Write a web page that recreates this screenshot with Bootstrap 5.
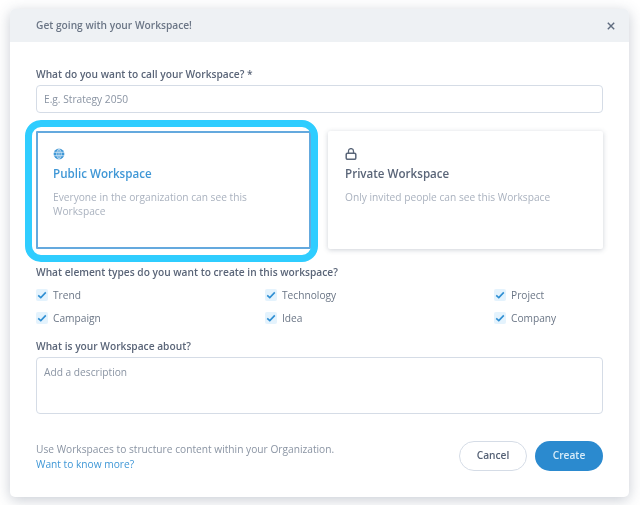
<!DOCTYPE html>
<html lang="en">
<head>
  <meta charset="UTF-8">
  <title>Get going with your Workspace</title>
  <meta name="viewport" content="width=device-width, initial-scale=1">
  <link href="https://cdn.jsdelivr.net/npm/bootstrap@5.3.0/dist/css/bootstrap.min.css" rel="stylesheet">
  <script src="https://cdn.jsdelivr.net/npm/bootstrap@5.3.0/dist/js/bootstrap.bundle.min.js"></script>
  <style>
    html, body {
      height: 100%;
      background: #fff;
      font-family: "Open Sans", sans-serif;
      overflow: hidden;
    }

    .ws-modal {
      width: 619px;
      height: 488px;
      margin: 9px 0 0 10px;
      background: #fff;
      border-radius: 5px;
      box-shadow: 0 3px 14px rgba(60, 75, 100, 0.28);
      overflow: hidden;
      filter: blur(.4px);
    }

    .ws-head {
      height: 33px;
      padding: 1px 13px 0 26px;
      background: #eef1f4;
      color: #6b7686;
      font-size: 10.2px;
      font-weight: 600;
    }

    .ws-close {
      width: 8px;
      height: 8px;
      color: #5f6c7f;
      margin-right: 1px;
    }

    .ws-body {
      padding: 0 26px;
    }

    .ws-label {
      margin: 0;
      color: #5a6578;
      font-size: 10.2px;
      font-weight: 600;
      line-height: 14px;
    }

    .ws-name-label {
      margin-top: 25px;
    }

    .ws-input {
      height: 28px;
      margin-top: 4px;
      padding: 0 7px;
      border: 1px solid #d5dce6;
      border-radius: 4px;
      font-size: 10.2px;
      color: #4d596c;
    }

    .ws-input::placeholder,
    .ws-text::placeholder {
      color: #8a94a3;
      opacity: 1;
    }

    .ws-text {
      height: 57px;
      margin-top: 4px;
      padding: 7px;
      border: 1px solid #d5dce6;
      border-radius: 4px;
      font-size: 10.2px;
      line-height: 14px;
      resize: none;
    }

    .ws-cards {
      margin-top: 18px;
      gap: 17px;
    }

    .ws-card {
      flex: 0 0 275px;
      height: 118px;
      padding: 17px 17px 0;
      border-radius: 2px;
      box-shadow: 0 1px 5px rgba(60, 75, 100, 0.25);
    }

    .ws-picked {
      border: 2px solid #64a9de;
      border-radius: 1px;
      box-shadow: none;
      padding: 15px 15px 0;
    }

    /* the bright callout ring sits over the card */
    .ws-picked::after {
      content: "";
      position: absolute;
      top: -13px;
      left: -13px;
      right: -9px;
      bottom: -15px;
      border: 7px solid #2fcdff;
      border-radius: 16px;
      pointer-events: none;
    }

    .ws-icon {
      display: block;
      width: 12px;
      height: 12px;
    }

    .ws-card h6 {
      margin: 6px 0 0;
      color: #5a6578;
      font-size: 11.6px;
      font-weight: 600;
      line-height: 16px;
    }

    .ws-picked h6 {
      color: #3f97d6;
    }

    .ws-card p {
      margin: 8px 0 0;
      color: #aab2bf;
      font-size: 10.2px;
      line-height: 14px;
    }

    .ws-types-label {
      margin-top: 16px;
    }

    .ws-types {
      display: grid;
      grid-template-columns: 229px 229px 1fr;
      row-gap: 9px;
      margin-top: 9px;
    }

    .ws-check {
      gap: 5px;
      height: 14px;
      color: #6b7686;
      font-size: 10.2px;
      line-height: 14px;
    }

    .ws-check .form-check-input:checked[type=checkbox] {
      width: 12px;
      height: 12px;
      margin: 0;
      border: 0;
      border-radius: 2px;
      background-color: #e4f3fd;
      background-size: 12px 12px;
      background-image: url("data:image/svg+xml,%3csvg xmlns='http://www.w3.org/2000/svg' viewBox='0 0 12 12'%3e%3cpath fill='none' stroke='%232f8fd3' stroke-width='1.6' d='M2.200 6.300 4.800 8.600 9.800 3.400'/%3e%3c/svg%3e");
    }

    .ws-about {
      margin-top: 14px;
    }

    .ws-foot {
      margin-top: 26px;
    }

    .ws-foot p {
      margin: 0;
      padding-top: 2px;
      color: #8a94a3;
      font-size: 10.2px;
      line-height: 15px;
    }

    .ws-foot a {
      color: #3f97d6;
      text-decoration: none;
    }

    .ws-btn {
      height: 30px;
      padding: 0;
      border-radius: 15px;
      font-size: 10.2px;
      font-weight: 600;
    }

    .ws-cancel {
      width: 68px;
      border: 1px solid #d5dce6;
      background: #fff;
      color: #556175;
    }

    .ws-create {
      width: 68px;
      border: 0;
      background: #2b8acf;
      color: #d8ecf9;
    }
  </style>
</head>
<body>
  <div class="ws-modal">
    <div class="ws-head d-flex align-items-center justify-content-between">
      <span>Get going with your Workspace!</span>
      <svg class="ws-close" viewBox="0 0 8 8"><path d="M.8.8l6.4 6.4M7.2.8.8 7.2" fill="none" stroke="currentColor" stroke-width="1.4"/></svg>
    </div>

    <form class="ws-body">
      <label class="ws-label ws-name-label d-block" for="wsName">What do you want to call your Workspace? *</label>
      <input id="wsName" type="text" class="form-control ws-input" placeholder="E.g. Strategy 2050">

      <div class="ws-cards d-flex">
        <div class="ws-card ws-picked position-relative">
          <svg class="ws-icon" viewBox="0 0 12 12">
            <circle cx="6" cy="6" r="5.4" fill="#3f97d6"/>
            <path d="M.8 4.3h10.400M.8 7.700h10.400M6 .6v10.800M6 .6C3 3.500 3 8.500 6 11.400M6 .6c3 2.900 3 7.900 0 10.800" fill="none" stroke="#fff" stroke-width=".6"/>
          </svg>
          <h6>Public Workspace</h6>
          <p>Everyone in the organization can see this Workspace</p>
        </div>
        <div class="ws-card">
          <svg class="ws-icon" viewBox="0 0 12 12">
            <rect x="1.200" y="5.300" width="9.600" height="6" rx="1.200" fill="none" stroke="#5a6679" stroke-width="1.500"/>
            <path d="M3.500 5.300V3.100a2.500 2.500 0 0 1 5 0v2.200" fill="none" stroke="#5a6679" stroke-width="1.300"/>
          </svg>
          <h6>Private Workspace</h6>
          <p>Only invited people can see this Workspace</p>
        </div>
      </div>

      <p class="ws-label ws-types-label">What element types do you want to create in this workspace?</p>
      <div class="ws-types">
        <label class="ws-check d-flex align-items-center"><input class="form-check-input" type="checkbox" checked>Trend</label>
        <label class="ws-check d-flex align-items-center"><input class="form-check-input" type="checkbox" checked>Technology</label>
        <label class="ws-check d-flex align-items-center"><input class="form-check-input" type="checkbox" checked>Project</label>
        <label class="ws-check d-flex align-items-center"><input class="form-check-input" type="checkbox" checked>Campaign</label>
        <label class="ws-check d-flex align-items-center"><input class="form-check-input" type="checkbox" checked>Idea</label>
        <label class="ws-check d-flex align-items-center"><input class="form-check-input" type="checkbox" checked>Company</label>
      </div>

      <label class="ws-label d-block ws-about" for="wsAbout">What is your Workspace about?</label>
      <textarea id="wsAbout" class="form-control ws-text" placeholder="Add a description"></textarea>

      <div class="ws-foot d-flex align-items-center justify-content-between">
        <p>Use Workspaces to structure content within your Organization.<br><a href="#">Want to know more?</a></p>
        <div class="d-flex gap-2">
          <button type="button" class="btn ws-btn ws-cancel">Cancel</button>
          <button type="button" class="btn ws-btn ws-create">Create</button>
        </div>
      </div>
    </form>
  </div>
</body>
</html>
